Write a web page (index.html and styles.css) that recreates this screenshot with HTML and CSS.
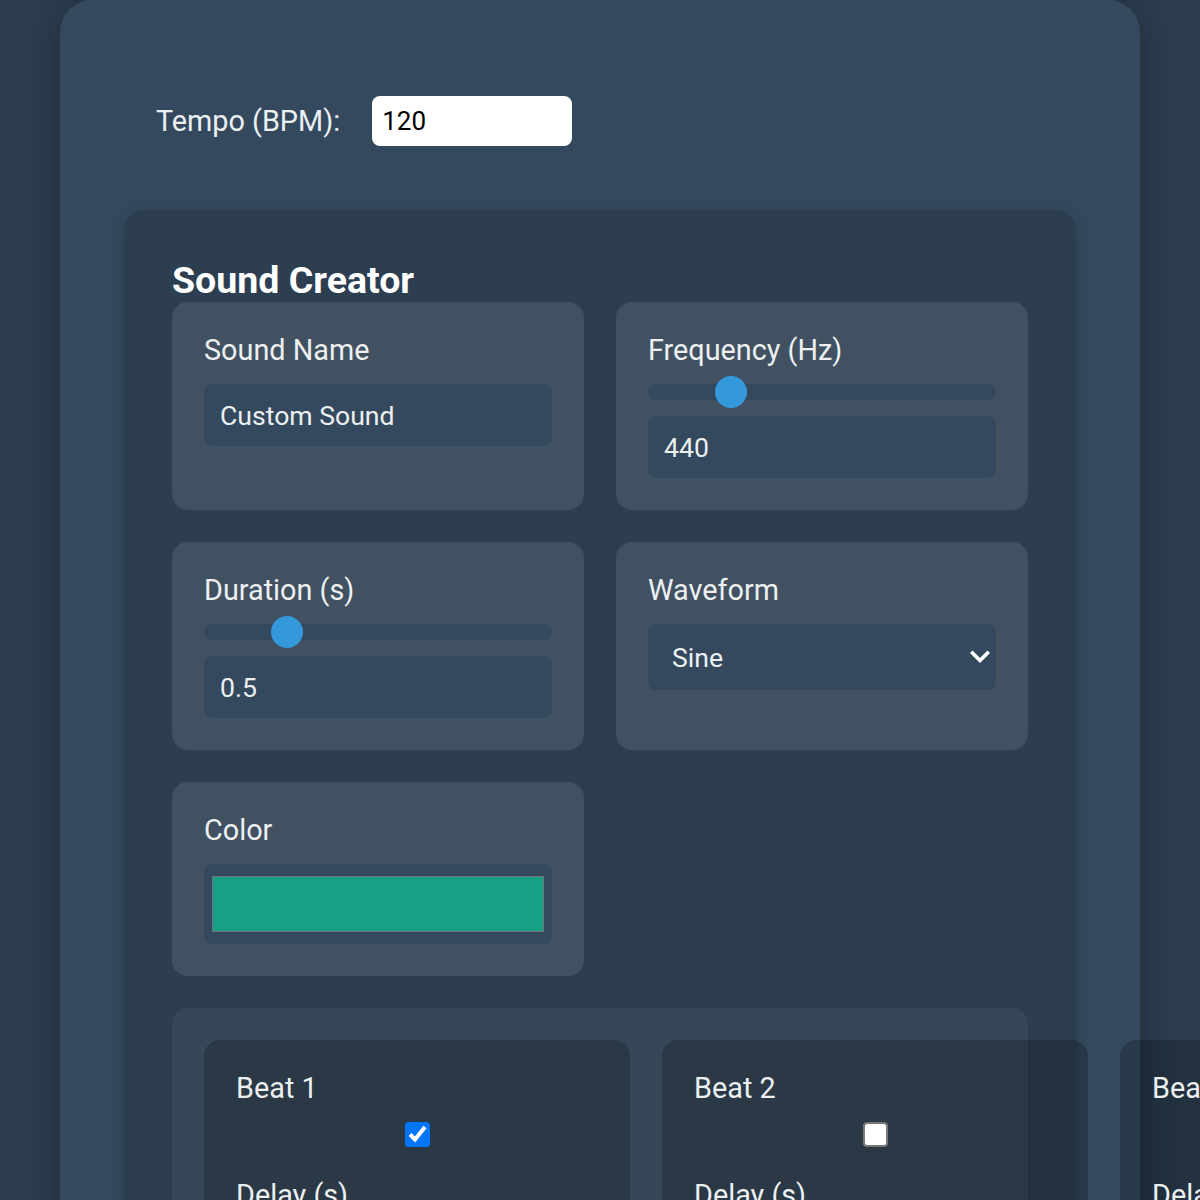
FILE: index.html
```html
<!DOCTYPE html>
<html lang="en">
<head>
<meta charset="utf-8">
<title>Sound Creator</title>
<link rel="stylesheet" href="styles.css">
</head>
<body>
<div class="app">
  <div class="tempo-row">
    <label class="tempo-label" for="tempo">Tempo (BPM):</label>
    <input class="tempo-input" id="tempo" type="number" value="120">
  </div>
  <section class="creator">
    <h2 class="creator-title">Sound Creator</h2>
    <div class="field-grid">
      <div class="field-card">
        <label class="field-label" for="sname">Sound Name</label>
        <input class="field-input" id="sname" type="text" value="Custom Sound">
      </div>
      <div class="field-card">
        <label class="field-label" for="freq">Frequency (Hz)</label>
        <input class="range" id="freq" type="range" min="20" max="2000" value="440">
        <input class="field-input" type="number" value="440">
      </div>
      <div class="field-card">
        <label class="field-label" for="dur">Duration (s)</label>
        <input class="range" id="dur" type="range" min="0.1" max="2" step="0.1" value="0.5">
        <input class="field-input" type="number" value="0.5">
      </div>
      <div class="field-card">
        <label class="field-label" for="wave">Waveform</label>
        <div class="select-wrap">
          <select class="field-select" id="wave">
            <option>Sine</option>
            <option>Square</option>
            <option>Sawtooth</option>
            <option>Triangle</option>
          </select>
          <svg class="select-arrow" width="20" height="14" viewBox="0 0 20 14" aria-hidden="true">
            <path d="M2.5 3 L10 10.5 L17.5 3" fill="none" stroke="#ffffff" stroke-width="3.6" stroke-linecap="square"/>
          </svg>
        </div>
      </div>
      <div class="field-card">
        <label class="field-label" for="col">Color</label>
        <input class="color-input" id="col" type="color" value="#16a085">
      </div>
    </div>
    <div class="beat-panel">
      <div class="beat-track">
        <div class="beat-card">
          <div class="beat-label">Beat 1</div>
          <input class="beat-check" type="checkbox" checked>
          <label class="beat-label">Delay (s)</label>
          <input class="field-input" type="number" value="0">
        </div>
        <div class="beat-card">
          <div class="beat-label">Beat 2</div>
          <input class="beat-check" type="checkbox">
          <label class="beat-label">Delay (s)</label>
          <input class="field-input" type="number" value="0">
        </div>
        <div class="beat-card">
          <div class="beat-label">Beat 3</div>
          <input class="beat-check" type="checkbox">
          <label class="beat-label">Delay (s)</label>
          <input class="field-input" type="number" value="0">
        </div>
        <div class="beat-card">
          <div class="beat-label">Beat 4</div>
          <input class="beat-check" type="checkbox">
          <label class="beat-label">Delay (s)</label>
          <input class="field-input" type="number" value="0">
        </div>
      </div>
    </div>
  </section>
</div>
</body>
</html>
```

FILE: styles.css
```css
html {
  scrollbar-width: none;
}
html::-webkit-scrollbar {
  display: none;
}
body {
  margin: 0;
  background: #2c3e50;
  font-family: Roboto, "Liberation Sans", Arial, sans-serif;
  color: #ecf0f1;
  overflow-x: hidden;
}
.app {
  box-sizing: border-box;
  width: 1080px;
  margin: 0 auto;
  min-height: 1400px;
  padding: 64px;
  background: #34495e;
  border-radius: 32px 32px 0 0;
  box-shadow: 0 0 40px rgba(0, 0, 0, 0.3);
}
.tempo-row {
  display: flex;
  align-items: center;
  gap: 32px;
  padding: 32px;
  margin-bottom: 32px;
}
.tempo-label {
  font-size: 28.8px;
  color: #ecf0f1;
}
.tempo-input {
  box-sizing: border-box;
  width: 200px;
  height: 50px;
  border: none;
  border-radius: 8px;
  padding: 0 10px;
  background: #ffffff;
  color: #000000;
  font-family: Roboto, "Liberation Sans", Arial, sans-serif;
  font-size: 26px;
}
input[type="number"]::-webkit-inner-spin-button,
input[type="number"]::-webkit-outer-spin-button {
  -webkit-appearance: none;
  margin: 0;
}
.creator {
  background: #2c3e50;
  border-radius: 20px;
  padding: 48px;
  box-shadow: 0 4px 16px rgba(0, 0, 0, 0.15);
}
.creator-title {
  margin: 0;
  font-size: 37.5px;
  font-weight: 700;
  color: #ffffff;
}
.field-grid {
  display: grid;
  grid-template-columns: 1fr 1fr;
  gap: 32px;
}
.field-card {
  min-width: 0;
  display: flex;
  flex-direction: column;
  background: rgba(255, 255, 255, 0.1);
  border-radius: 16px;
  padding: 32px;
}
.field-label {
  display: block;
  font-size: 28.8px;
  line-height: 32px;
  margin-bottom: 18px;
  color: #ecf0f1;
}
.field-input {
  box-sizing: border-box;
  width: 100%;
  height: 62px;
  border: none;
  border-radius: 8px;
  padding: 0 16px;
  background: #34495e;
  color: #ecf0f1;
  font-family: Roboto, "Liberation Sans", Arial, sans-serif;
  font-size: 26.6px;
}
.range {
  -webkit-appearance: none;
  appearance: none;
  display: block;
  width: 100%;
  height: 16px;
  margin: 0 0 16px;
  border-radius: 8px;
  background: #34495e;
  outline: none;
}
.range::-webkit-slider-thumb {
  -webkit-appearance: none;
  appearance: none;
  width: 32px;
  height: 32px;
  border-radius: 50%;
  background: #3498db;
  border: none;
}
.select-wrap {
  position: relative;
}
.field-select {
  -webkit-appearance: none;
  appearance: none;
  box-sizing: border-box;
  display: block;
  width: 100%;
  height: 66px;
  border: none;
  border-radius: 8px;
  padding: 0 24px;
  background: #34495e;
  color: #ecf0f1;
  font-family: Roboto, "Liberation Sans", Arial, sans-serif;
  font-size: 26.6px;
}
.select-arrow {
  position: absolute;
  right: 6px;
  top: 26px;
  pointer-events: none;
}
.color-input {
  box-sizing: border-box;
  display: block;
  width: 100%;
  height: 80px;
  padding: 8px;
  border: none;
  border-radius: 8px;
  background: #34495e;
  cursor: pointer;
}
.color-input::-webkit-color-swatch-wrapper {
  padding: 4px 0;
}
.color-input::-webkit-color-swatch {
  border: 1px solid #777777;
  border-radius: 0;
}
.beat-panel {
  margin-top: 32px;
  background: rgba(255, 255, 255, 0.05);
  border-radius: 16px;
  padding: 32px;
}
.beat-track {
  display: flex;
  gap: 32px;
}
.beat-card {
  flex: 0 0 426px;
  box-sizing: border-box;
  background: rgba(0, 0, 0, 0.2);
  border-radius: 16px;
  padding: 32px;
}
.beat-label {
  display: block;
  font-size: 28.8px;
  line-height: 32px;
  margin-bottom: 18px;
  color: #ecf0f1;
}
.beat-check {
  display: block;
  width: 13px;
  height: 13px;
  margin: 24px auto 38px;
  transform: scale(1.92);
}
```
